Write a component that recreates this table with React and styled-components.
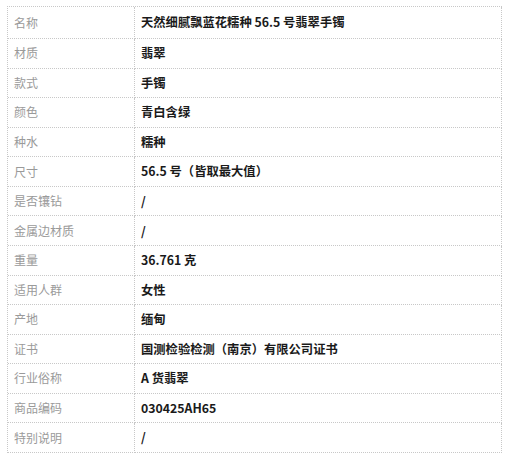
import React from "react";
import styled, { createGlobalStyle } from "styled-components";

const Global = createGlobalStyle`
  html, body { margin: 0; padding: 0; background: #fff; }
  body { font-family: "Noto Sans CJK SC", "Noto Sans", sans-serif; }
`;

const Page = styled.div`
  padding: 6px 0 0 7px;
  width: 495px;
`;

const Table = styled.div`
  display: grid;
  grid-template-columns: 127px 1fr;
  border-top: 1px dotted #c8c8c8;
  border-left: 1px dotted #c8c8c8;
`;

const Cell = styled.div`
  box-sizing: border-box;
  height: ${(p) => (p.$first ? "32px" : "29.57px")};
  display: flex;
  align-items: center;
  padding: 0 6px;
  border-right: 1px dotted #c8c8c8;
  border-bottom: 1px dotted #c8c8c8;
  font-size: 12px;
  line-height: 1;
  white-space: nowrap;
`;

const Label = styled(Cell)`
  color: #9a9a9a;
  font-weight: 400;
`;

const Value = styled(Cell)`
  color: #1a1a1a;
  font-weight: 700;
  font-size: 12.3px;
`;

const rows = [
  ["名称", "天然细腻飘蓝花糯种 56.5 号翡翠手镯"],
  ["材质", "翡翠"],
  ["款式", "手镯"],
  ["颜色", "青白含绿"],
  ["种水", "糯种"],
  ["尺寸", "56.5 号（皆取最大值）"],
  ["是否镶钻", "/"],
  ["金属边材质", "/"],
  ["重量", "36.761 克"],
  ["适用人群", "女性"],
  ["产地", "缅甸"],
  ["证书", "国测检验检测（南京）有限公司证书"],
  ["行业俗称", "A 货翡翠"],
  ["商品编码", "030425AH65"],
  ["特别说明", "/"],
];

export default function App() {
  return (
    <Page>
      <Global />
      <Table>
        {rows.map(([k, v], i) => (
          <React.Fragment key={k}>
            <Label $first={i === 0}>{k}</Label>
            <Value $first={i === 0}>{v}</Value>
          </React.Fragment>
        ))}
      </Table>
    </Page>
  );
}
